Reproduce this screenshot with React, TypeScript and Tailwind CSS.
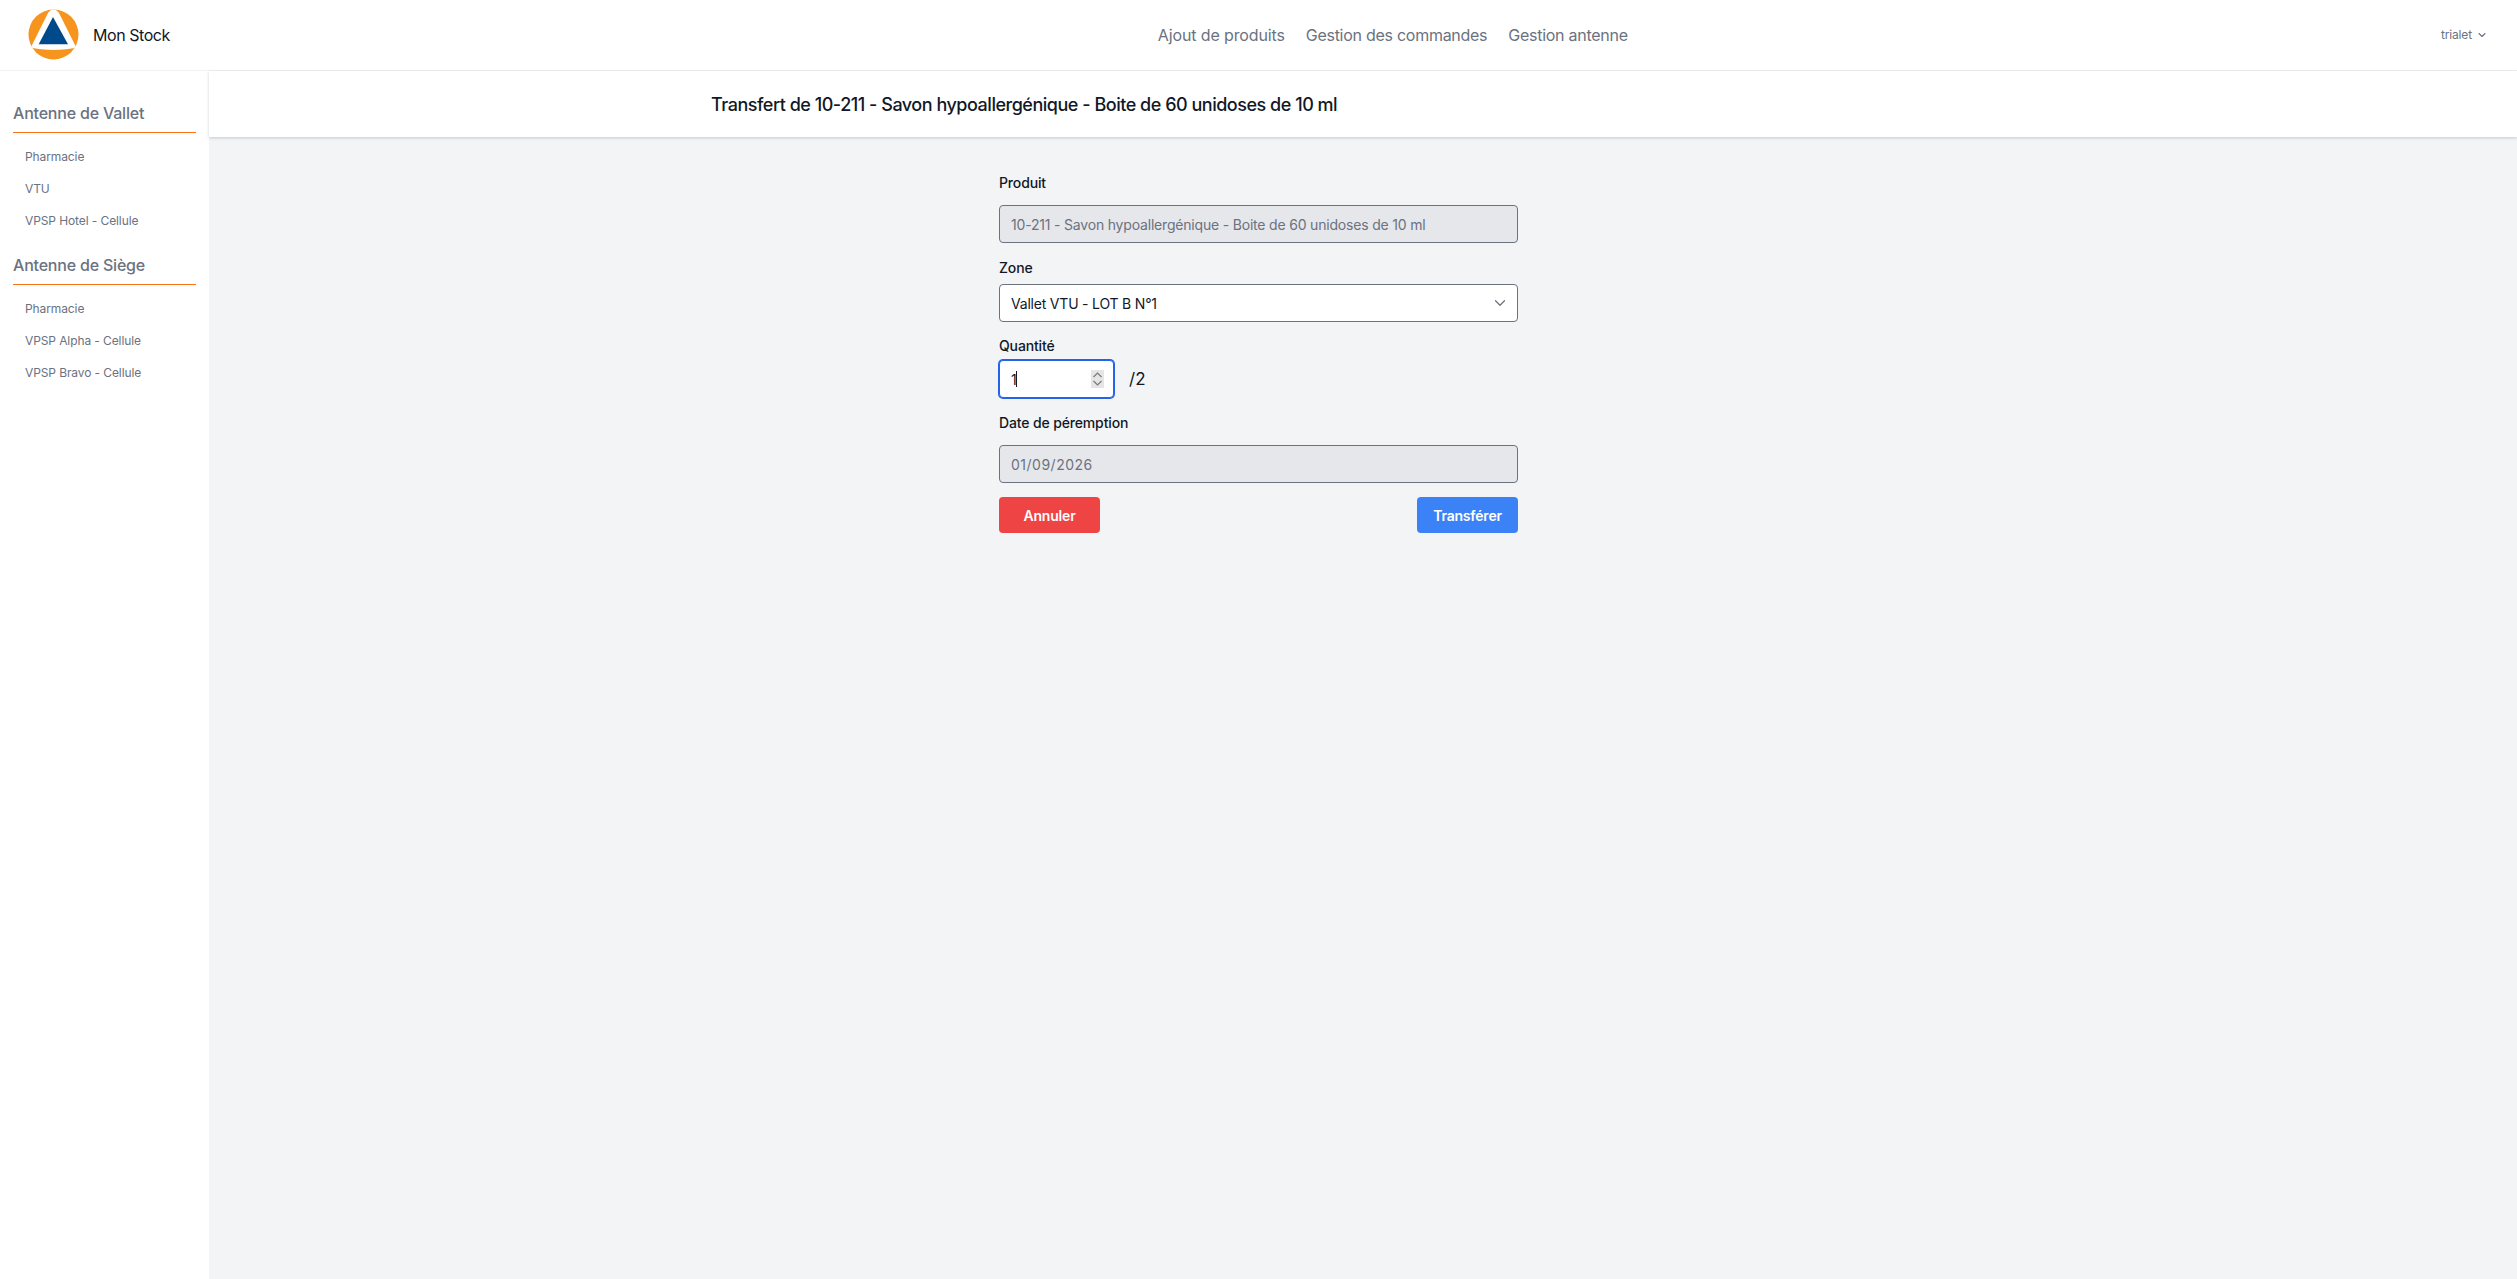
import React from "react";
import { ChevronDown } from "lucide-react";

const font = { fontFamily: "Inter, 'Liberation Sans', sans-serif" };

function Logo() {
  return (
    <svg width="51" height="51" viewBox="0 0 51 51">
      <circle cx="25.5" cy="25.5" r="25" fill="#f7941e" />
      <path d="M25.5 0.5 C28 0.5 30 2 31.5 5 L47 36 C48 38 47 39 45 39.3 C32 41.5 19 41.5 6 39.3 C4 39 3 38 4 36 L19.5 5 C21 2 23 0.5 25.5 0.5 Z" fill="#ffffff" />
      <polygon points="25,8 40,35.3 10.7,35.3" fill="#004a8b" />
    </svg>
  );
}

function Section({ title, items, className }: { title: string; items: string[]; className?: string }) {
  return (
    <div className={className}>
      <div className="h-[37px] mx-[13px] border-b border-[#f97316] pt-[5px]">
        <span className="block text-[16px] leading-[24px] font-medium text-[#6b7280] tracking-[-0.2px]">{title}</span>
      </div>
      <ul className="mt-[8px] flex flex-col">
        {items.map((i) => (
          <li key={i} className="h-[32px] flex items-center pl-[25px] text-[12px] text-[#6b7280] tracking-[-0.1px]">{i}</li>
        ))}
      </ul>
    </div>
  );
}

function Label({ children, className }: { children: React.ReactNode; className?: string }) {
  return <div className={`text-[14px] leading-[20px] font-medium text-[#111827] tracking-[-0.14px] ${className ?? ""}`}>{children}</div>;
}

export default function App() {
  return (
    <div style={font} className="h-screen w-full flex flex-col bg-white overflow-hidden">
      <header className="h-[71px] shrink-0 border-b border-[#f0f1f3] flex items-center bg-white">
        <div className="ml-[28px] w-[51px] h-[51px] -mt-px"><Logo /></div>
        <span className="ml-[14px] text-[16px] text-[#111827] tracking-[-0.45px]">Mon Stock</span>
        <nav className="ml-[988px] flex items-center gap-[21px] text-[16px] text-[#6b7280] tracking-[-0.27px]">
          <span className="tracking-[-0.13px]">Ajout de produits</span>
          <span>Gestion des commandes</span>
          <span>Gestion antenne</span>
        </nav>
        <div className="ml-auto mr-[29px] flex items-center gap-[4px] text-[12px] text-[#6b7280] tracking-[-0.15px]">
          <span>trialet</span>
          <ChevronDown size={12} strokeWidth={2.2} />
        </div>
      </header>
      <div className="flex-1 flex min-h-0">
        <aside className="w-[209px] shrink-0 bg-white pt-[25px]">
          <Section title="Antenne de Vallet" items={["Pharmacie", "VTU", "VPSP Hotel - Cellule"]} />
          <Section className="mt-[11px]" title="Antenne de Siège" items={["Pharmacie", "VPSP Alpha - Cellule", "VPSP Bravo - Cellule"]} />
        </aside>
        <main className="flex-1 bg-[#f3f4f6] min-w-0">
          <div className="h-[66px] bg-white shadow-[0_1px_3px_rgba(0,0,0,0.18)] flex items-center pl-[502px] text-[18px] font-medium text-[#111827] tracking-[-0.48px]">
            Transfert de 10-211 - Savon hypoallergénique - Boite de 60 unidoses de 10 ml
          </div>
          <form className="ml-[790px] w-[519px] pt-[36px]">
            <Label>Produit</Label>
            <input readOnly value="10-211 - Savon hypoallergénique - Boite de 60 unidoses de 10 ml" className="mt-[12px] w-full h-[38px] rounded-[4px] border border-[#6b7280] bg-[#e5e7eb] px-[11px] text-[14px] text-[#6b7280] tracking-[-0.19px] outline-none" />
            <Label className="mt-[15px]">Zone</Label>
            <div className="relative mt-[6px]">
              <select defaultValue="a" className="appearance-none w-full h-[38px] rounded-[4px] border border-[#6b7280] bg-white px-[11px] text-[14px] text-[#111827] tracking-[-0.2px] outline-none">
                <option value="a">Vallet VTU - LOT B N°1</option>
              </select>
              <ChevronDown size={18} strokeWidth={1.6} className="absolute right-[9px] top-[10px] text-[#6b7280] pointer-events-none" />
            </div>
            <Label className="mt-[14px]">Quantité</Label>
            <div className="mt-[4px] flex items-center">
              <div className="relative w-[115px] h-[38px]">
                <input autoFocus type="number" defaultValue={1} className="w-full h-full rounded-[4px] border border-[#2563eb] ring-1 ring-[#2563eb] bg-white px-[11px] text-[14px] text-[#111827] outline-none [appearance:textfield] [&::-webkit-inner-spin-button]:appearance-none [&::-webkit-outer-spin-button]:appearance-none" />
                <span className="absolute left-[17px] top-[11px] w-px h-[16px] bg-[#111827]" />
                <svg className="absolute left-[92px] top-[10px]" width="13" height="18" viewBox="0 0 13 18">
                  <rect width="13" height="18" fill="#e5e5e5" />
                  <path d="M2.5 7 L6.5 3 L10.5 7" fill="none" stroke="#7a7a7a" strokeWidth="1.2" />
                  <path d="M2.5 11 L6.5 15 L10.5 11" fill="none" stroke="#7a7a7a" strokeWidth="1.2" />
                </svg>
              </div>
              <span className="ml-[15px] mt-px text-[17px] text-[#111827]">/2</span>
            </div>
            <Label className="mt-[15px]">Date de péremption</Label>
            <input readOnly value="01/09/2026" className="mt-[12px] w-full h-[38px] rounded-[4px] border border-[#6b7280] bg-[#e5e7eb] px-[11px] text-[14px] text-[#6b7280] tracking-[0.5px] outline-none" />
            <div className="mt-[14px] flex justify-between">
              <button type="button" className="w-[101px] h-[36px] rounded-[4px] bg-[#ef4444] text-white text-[14px] font-semibold tracking-[-0.2px]">Annuler</button>
              <button type="button" className="w-[101px] h-[36px] rounded-[4px] bg-[#3b82f6] text-white text-[14px] font-semibold tracking-[-0.2px]">Transférer</button>
            </div>
          </form>
        </main>
      </div>
    </div>
  );
}
